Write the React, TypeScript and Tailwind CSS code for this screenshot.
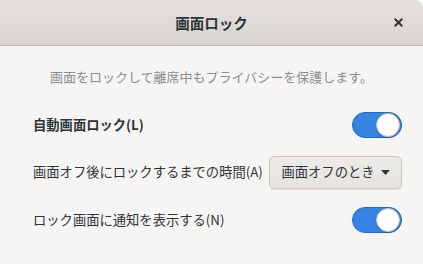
import { X } from "lucide-react";

function Toggle() {
  return (
    <div className="w-[50px] h-[26px] rounded-full bg-[#3584e4] border border-[#1b6acb] flex items-center justify-end p-[1px]">
      <div className="w-[24px] h-[24px] rounded-full bg-white border border-[#c0bbb6] shadow-sm"></div>
    </div>
  );
}

export default function App() {
  const font = { fontFamily: '"Noto Sans CJK JP", "Noto Sans", sans-serif' };
  return (
    <div className="w-[423px] h-[264px] bg-white" style={font}>
      <div className="w-full h-full bg-[#f6f5f4] rounded-tr-[8px] overflow-hidden flex flex-col">
        {/* Header */}
        <div className="h-[46px] shrink-0 bg-gradient-to-b from-[#e3e0dd] to-[#d9d5d1] border-b border-[#bfb8b1] flex items-center justify-center relative">
          <span className="text-[14.5px] font-bold text-[#2e3436]">画面ロック</span>
          <X className="absolute right-[18px] top-[16px] w-[13px] h-[13px] text-[#2e3436]" strokeWidth={3.5} />
        </div>

        {/* Body */}
        <div className="flex flex-col pl-[33px] pr-[21px] text-[13.3px] text-[#2e3436]">
          <p className="mt-[22px] h-[18px] leading-[18px] text-[13px] text-center text-[#8b8e8f] -ml-[12px]">
            画面をロックして離席中もプライバシーを保護します。
          </p>
          <div className="mt-[22px] h-[34px] flex items-center justify-between">
            <span className="font-bold">自動画面ロック(L)</span>
            <Toggle />
          </div>
          <div className="mt-[13px] h-[34px] flex items-center justify-between">
            <span>画面オフ後にロックするまでの時間(A)</span>
            <div className="h-[33px] w-[133px] rounded-[5px] border border-[#cdc7c2] bg-gradient-to-b from-[#edebe9] to-[#e6e3e0] shadow-[0_1px_1px_rgba(0,0,0,0.07)] flex items-center justify-center gap-[6px]">
              <span>画面オフのとき</span>
              <svg width="9" height="5" viewBox="0 0 9 5">
                <path d="M0 0 L9 0 L4.5 5 Z" fill="#2e3436" />
              </svg>
            </div>
          </div>
          <div className="mt-[14px] h-[34px] flex items-center justify-between">
            <span>ロック画面に通知を表示する(N)</span>
            <Toggle />
          </div>
        </div>
      </div>
    </div>
  );
}
